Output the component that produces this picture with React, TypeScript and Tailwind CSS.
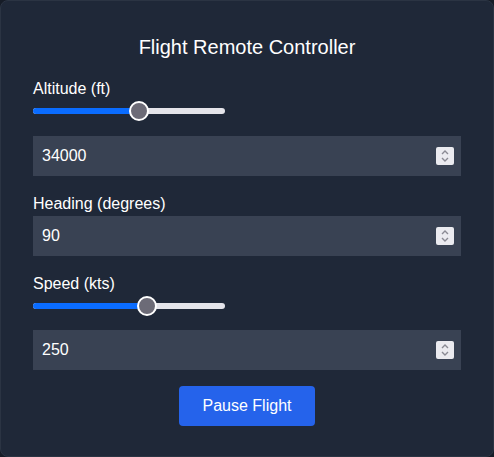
import { useState } from 'react';

function Slider({ pct }: { pct: number }) {
  return (
    <div className="relative h-5 w-48">
      <div className="absolute left-0 right-0 top-[7px] h-[6px] rounded-full bg-[#e4e4ea]" />
      <div
        className="absolute left-0 top-[7px] h-[6px] rounded-full bg-[#0a6cff]"
        style={{ width: `${pct}%` }}
      />
      <div
        className="absolute top-[0px] h-5 w-5 -translate-x-1/2 rounded-full border-2 border-white bg-[#6c6b77]"
        style={{ left: `${pct}%` }}
      />
    </div>
  );
}

function NumberBox({ value }: { value: string }) {
  return (
    <div className="flex h-10 w-full items-center justify-between bg-[#394253] pl-[9px] pr-[7px] text-base text-white">
      <span>{value}</span>
      <span className="flex h-[18px] w-[18px] items-center justify-center rounded-[2px] bg-[#ebebf0]">
        <svg width="10" height="14" viewBox="0 0 10 14" fill="none" stroke="#8a8a94" strokeWidth="1.4">
          <path d="M2 5 L5 2 L8 5" />
          <path d="M2 9 L5 12 L8 9" />
        </svg>
      </span>
    </div>
  );
}

export default function App() {
  const [paused, setPaused] = useState(false);

  return (
    <div className="h-[457px] w-[494px] bg-[#161c27]" style={{ fontFamily: '"Liberation Sans", Arial, sans-serif' }}>
      <div className="h-full w-full rounded-lg border border-[#2b3443] bg-[#1f2838] px-8 pt-8 text-white">
        <h1 className="mb-4 text-center text-xl font-medium">Flight Remote Controller</h1>

        <div>
          <label className="block text-base font-medium">Altitude (ft)</label>
          <Slider pct={55} />
          <div className="mt-[15px]">
            <NumberBox value="34000" />
          </div>
        </div>

        <div className="mt-4">
          <label className="block text-base font-medium">Heading (degrees)</label>
          <NumberBox value="90" />
        </div>

        <div className="mt-4">
          <label className="block text-base font-medium">Speed (kts)</label>
          <Slider pct={59.5} />
          <div className="mt-[14px]">
            <NumberBox value="250" />
          </div>
        </div>

        <div className="mt-4 flex justify-center">
          <button
            onClick={() => setPaused(!paused)}
            className="h-10 w-[136px] rounded bg-[#2563eb] text-base font-medium text-white"
          >
            {paused ? 'Resume Flight' : 'Pause Flight'}
          </button>
        </div>
      </div>
    </div>
  );
}
